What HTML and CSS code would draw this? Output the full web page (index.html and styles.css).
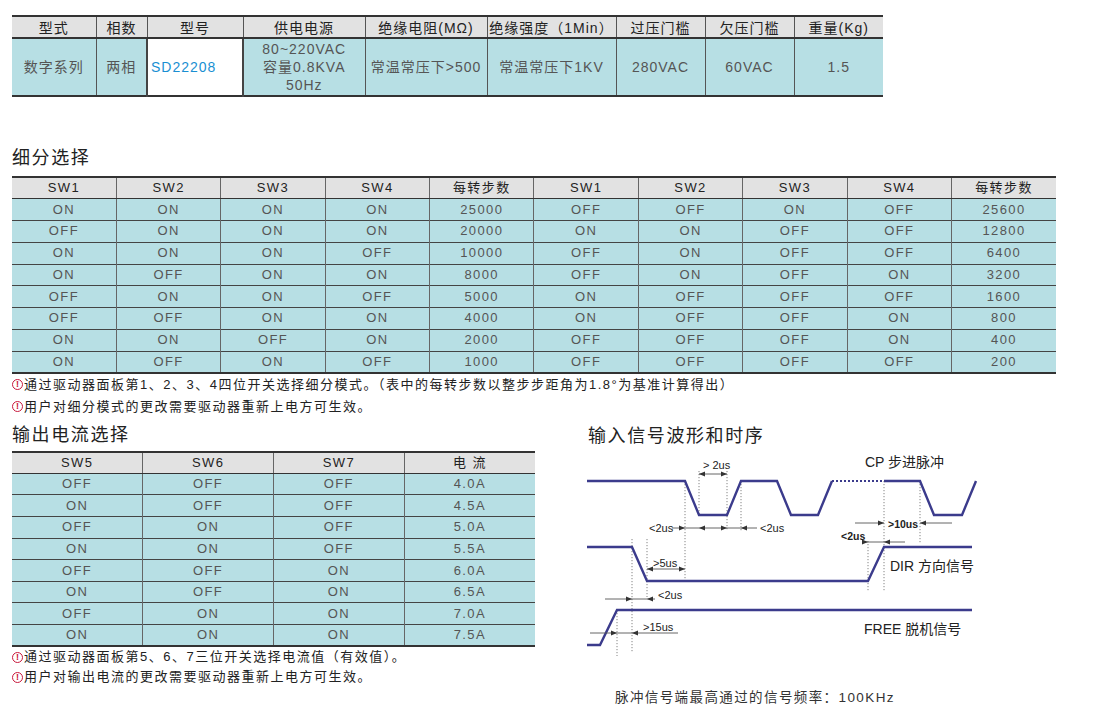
FILE: index.html
```html
<!DOCTYPE html>
<html lang="zh-CN">
<head>
<meta charset="utf-8">
<title>SD22208</title>
<link rel="stylesheet" href="styles.css">
</head>
<body>
<div class="page">
  <table class="spec">
    <colgroup>
      <col class="s1"><col class="s2"><col class="s3"><col class="s4"><col class="s5"><col class="s6"><col class="s7"><col class="s7"><col class="s7">
    </colgroup>
    <tr><th>型式</th><th>相数</th><th>型号</th><th>供电电源</th><th>绝缘电阻(MΩ)</th><th>绝缘强度（1Min）</th><th>过压门槛</th><th>欠压门槛</th><th>重量(Kg)</th></tr>
    <tr><td>数字系列</td><td>两相</td><td class="model">SD22208</td><td class="multi">80~220VAC<br>容量0.8KVA<br>50Hz</td><td>常温常压下&gt;500</td><td>常温常压下1KV</td><td>280VAC</td><td>60VAC</td><td>1.5</td></tr>
  </table>

  <h2 class="title first">细分选择</h2>
  <table class="grid sub">
    <tr><th>SW1</th><th>SW2</th><th>SW3</th><th>SW4</th><th>每转步数</th><th>SW1</th><th>SW2</th><th>SW3</th><th>SW4</th><th>每转步数</th></tr>
    <tr><td>ON</td><td>ON</td><td>ON</td><td>ON</td><td>25000</td><td>OFF</td><td>OFF</td><td>ON</td><td>OFF</td><td>25600</td></tr>
    <tr><td>OFF</td><td>ON</td><td>ON</td><td>ON</td><td>20000</td><td>ON</td><td>ON</td><td>OFF</td><td>OFF</td><td>12800</td></tr>
    <tr><td>ON</td><td>ON</td><td>ON</td><td>OFF</td><td>10000</td><td>OFF</td><td>ON</td><td>OFF</td><td>OFF</td><td>6400</td></tr>
    <tr><td>ON</td><td>OFF</td><td>ON</td><td>ON</td><td>8000</td><td>OFF</td><td>ON</td><td>OFF</td><td>ON</td><td>3200</td></tr>
    <tr><td>OFF</td><td>ON</td><td>ON</td><td>OFF</td><td>5000</td><td>ON</td><td>OFF</td><td>OFF</td><td>OFF</td><td>1600</td></tr>
    <tr><td>OFF</td><td>OFF</td><td>ON</td><td>ON</td><td>4000</td><td>ON</td><td>OFF</td><td>OFF</td><td>ON</td><td>800</td></tr>
    <tr><td>ON</td><td>ON</td><td>OFF</td><td>ON</td><td>2000</td><td>OFF</td><td>OFF</td><td>OFF</td><td>ON</td><td>400</td></tr>
    <tr><td>ON</td><td>OFF</td><td>ON</td><td>OFF</td><td>1000</td><td>OFF</td><td>OFF</td><td>OFF</td><td>OFF</td><td>200</td></tr>
  </table>
  <div class="notes">
    <p class="note"><span class="warn">!</span>通过驱动器面板第1、2、3、4四位开关选择细分模式。（表中的每转步数以整步步距角为1.8°为基准计算得出）</p>
    <p class="note"><span class="warn">!</span>用户对细分模式的更改需要驱动器重新上电方可生效。</p>
  </div>

  <div class="bottom">
    <div class="left">
      <h2 class="title">输出电流选择</h2>
      <table class="grid cur">
        <tr><th>SW5</th><th>SW6</th><th>SW7</th><th>电 流</th></tr>
        <tr><td>OFF</td><td>OFF</td><td>OFF</td><td>4.0A</td></tr>
        <tr><td>ON</td><td>OFF</td><td>OFF</td><td>4.5A</td></tr>
        <tr><td>OFF</td><td>ON</td><td>OFF</td><td>5.0A</td></tr>
        <tr><td>ON</td><td>ON</td><td>OFF</td><td>5.5A</td></tr>
        <tr><td>OFF</td><td>OFF</td><td>ON</td><td>6.0A</td></tr>
        <tr><td>ON</td><td>OFF</td><td>ON</td><td>6.5A</td></tr>
        <tr><td>OFF</td><td>ON</td><td>ON</td><td>7.0A</td></tr>
        <tr><td>ON</td><td>ON</td><td>ON</td><td>7.5A</td></tr>
      </table>
      <div class="notes small">
        <p class="note"><span class="warn">!</span>通过驱动器面板第5、6、7三位开关选择电流值（有效值）。</p>
        <p class="note"><span class="warn">!</span>用户对输出电流的更改需要驱动器重新上电方可生效。</p>
      </div>
    </div>

    <div class="right">
      <h2 class="title rt">输入信号波形和时序</h2>
      <svg class="diagram" width="420" height="237" viewBox="0 0 420 237">
        <defs>
          <marker id="ah" viewBox="0 0 6 6" refX="6" refY="3" markerWidth="6" markerHeight="6" orient="auto" markerUnits="userSpaceOnUse">
            <path d="M0,0.6 L6,3 L0,5.4 z" fill="#333"/>
          </marker>
        </defs>
        <g class="guide">
          <line x1="124" y1="20" x2="124" y2="64"/>
          <line x1="152" y1="20" x2="152" y2="80"/>
          <line x1="166" y1="30" x2="166" y2="80"/>
          <line x1="110" y1="30" x2="110" y2="130"/>
          <line x1="57" y1="88" x2="57" y2="202"/>
          <line x1="72" y1="88" x2="72" y2="146"/>
          <line x1="42" y1="159" x2="42" y2="205"/>
          <line x1="293" y1="90" x2="293" y2="140"/>
          <line x1="309" y1="30" x2="309" y2="140"/>
          <line x1="345" y1="33" x2="345" y2="93"/>
        </g>
        <g class="sig">
          <path d="M12,30 H110 L124,64 H152 L166,30 H202 L216,64 H243 L257,30"/>
          <path class="dot" d="M257,30 H309"/>
          <path d="M309,30 H345 L359,64 H387 L401,30"/>
          <path d="M12,96 H57 L72,130 H293 L309,96 H397"/>
          <path d="M12,194 H25 L42,159 H397"/>
        </g>
        <g class="arr">
          <line x1="138" y1="23" x2="124" y2="23" marker-end="url(#ah)"/>
          <line x1="138" y1="23" x2="152" y2="23" marker-end="url(#ah)"/>

          <line x1="97" y1="77" x2="110" y2="77" marker-end="url(#ah)"/>
          <line x1="110" y1="77" x2="124" y2="77"/>
          <line x1="138" y1="77" x2="124" y2="77" marker-end="url(#ah)"/>
          <line x1="138" y1="77" x2="152" y2="77" marker-end="url(#ah)"/>
          <line x1="152" y1="77" x2="166" y2="77"/>
          <line x1="182" y1="77" x2="166" y2="77" marker-end="url(#ah)"/>

          <line x1="91" y1="118" x2="72" y2="118" marker-end="url(#ah)"/>
          <line x1="91" y1="118" x2="110" y2="118" marker-end="url(#ah)"/>

          <line x1="30" y1="148" x2="57" y2="148" marker-end="url(#ah)"/>
          <line x1="57" y1="148" x2="72" y2="148"/>
          <line x1="80" y1="148" x2="72" y2="148" marker-end="url(#ah)"/>

          <line x1="15" y1="182" x2="42" y2="182" marker-end="url(#ah)"/>
          <line x1="42" y1="182" x2="57" y2="182"/>
          <line x1="103" y1="182" x2="57" y2="182" marker-end="url(#ah)"/>

          <line x1="280" y1="72" x2="309" y2="72" marker-end="url(#ah)"/>
          <line x1="377" y1="72" x2="345" y2="72" marker-end="url(#ah)"/>

          <line x1="287" y1="91" x2="293" y2="91" marker-end="url(#ah)"/>
          <line x1="293" y1="91" x2="309" y2="91"/>
          <line x1="330" y1="91" x2="309" y2="91" marker-end="url(#ah)"/>
        </g>
        <g class="sm">
          <text x="128" y="18">&gt; 2us</text>
          <text x="74" y="81">&lt;2us</text>
          <text x="185" y="81">&lt;2us</text>
          <text x="78" y="116">&gt;5us</text>
          <text x="83" y="148">&lt;2us</text>
          <text x="68" y="180">&gt;15us</text>
          <text class="b" x="313" y="77">&gt;10us</text>
          <text class="b" x="266" y="89">&lt;2us</text>
        </g>
        <g class="lb">
          <text x="290" y="16">CP 步进脉冲</text>
          <text x="315" y="120">DIR 方向信号</text>
          <text x="289" y="183">FREE 脱机信号</text>
        </g>
      </svg>
      <p class="freq">脉冲信号端最高通过的信号频率：100KHz</p>
    </div>
  </div>
</div>
</body>
</html>
```

FILE: styles.css
```css
* { box-sizing: border-box; }
html, body { margin: 0; padding: 0; background: #fff; }
body {
  font-family: "Liberation Sans", "Noto Sans CJK SC", sans-serif;
  color: #222;
}
.page {
  width: 1100px;
  height: 722px;
  padding: 15px 0 0 12px;
  overflow: hidden;
}

/* ---------- spec table ---------- */
.spec {
  border-collapse: collapse;
  table-layout: fixed;
  width: 871px;
  border-top: 2px solid #333;
  border-bottom: 2px solid #333;
}
.s1 { width: 84px; }
.s2 { width: 51px; }
.s3 { width: 96px; }
.s4 { width: 122px; }
.s5 { width: 122px; }
.s6 { width: 129px; }
.s7 { width: 89px; }
.spec th, .spec td {
  padding: 0;
  text-align: center;
  font-size: 14px;
  letter-spacing: 1px;
  white-space: nowrap;
  border-left: 1px solid #555;
}
.spec th:first-child, .spec td:first-child { border-left: none; }
.spec th {
  height: 21px;
  font-weight: normal;
  color: #222;
  background: #e2e2e2;
  border-bottom: 2px solid #333;
}
.spec td {
  height: 58px;
  color: #555;
  background: #b7dfe4;
  line-height: 18px;
}
.spec td.model {
  background: #fff;
  color: #1a8fd2;
  text-align: left;
  padding-left: 3px;
  border-left: 2px solid #444;
  border-right: 2px solid #444;
}

/* ---------- titles ---------- */
.title {
  margin: 5px 0 0 0;
  font-size: 18px;
  line-height: 24px;
  font-weight: normal;
  letter-spacing: 1.6px;
  color: #222;
}
.title.first { margin-top: 49px; }
.title.rt { margin-top: 6px; padding-left: 13px; }

/* ---------- grid tables ---------- */
.grid {
  border-collapse: collapse;
  table-layout: fixed;
  border-top: 2px solid #333;
  border-bottom: 2px solid #333;
}
.grid.sub { width: 1044px; margin-top: 6px; }
.grid.cur { width: 523px; margin-top: 4px; }
.grid th, .grid td {
  padding: 0;
  text-align: center;
  font-size: 13px;
  line-height: 16px;
  letter-spacing: 1.4px;
  border-left: 1px solid #666;
}
.grid th:first-child, .grid td:first-child { border-left: none; }
.grid th {
  font-weight: normal;
  color: #222;
  background: #e2e2e2;
  border-bottom: 1px solid #333;
}
.grid td {
  color: #555;
  background: #b7dfe4;
  border-top: 1px solid #444;
}
.sub tr { height: 21.75px; }
.cur tr { height: 21.6px; }

/* ---------- notes ---------- */
.notes { margin: 0; }
.note {
  margin: 0;
  font-size: 13px;
  line-height: 22px;
  letter-spacing: 1.5px;
  color: #222;
  white-space: nowrap;
  display: flex;
  align-items: center;
}
.notes.small { margin-top: 0; }
.notes.small .note { line-height: 20px; }
.warn {
  display: inline-flex;
  align-items: center;
  justify-content: center;
  width: 11px;
  height: 11px;
  margin-right: 1px;
  border: 1.3px solid #c8183c;
  border-radius: 50%;
  color: #c8183c;
  font-size: 9px;
  font-weight: bold;
  line-height: 1;
  letter-spacing: 0;
}

/* ---------- bottom ---------- */
.bottom { display: flex; align-items: flex-start; }
.left { width: 523px; flex: none; }
.right { margin-left: 40px; width: 430px; flex: none; }
.diagram { display: block; margin-top: 3px; }
.guide line {
  stroke: #777;
  stroke-width: 0.9;
  stroke-dasharray: 1.2 1.8;
}
.sig path {
  fill: none;
  stroke: #3b3b8c;
  stroke-width: 2.4;
  stroke-linejoin: miter;
}
.sig path.dot { stroke-dasharray: 2 2; stroke-width: 2; }
.arr line { stroke: #555; stroke-width: 0.9; }
.diagram text {
  font-family: "Liberation Sans", "Noto Sans CJK SC", sans-serif;
  fill: #222;
}
.sm text { font-size: 11px; }
.sm text.b { font-weight: bold; font-size: 10.5px; }
.lb text { font-size: 14px; }
.freq {
  margin: 0;
  padding-left: 40px;
  font-size: 13.5px;
  line-height: 20px;
  letter-spacing: 1.4px;
  color: #333;
}
```
